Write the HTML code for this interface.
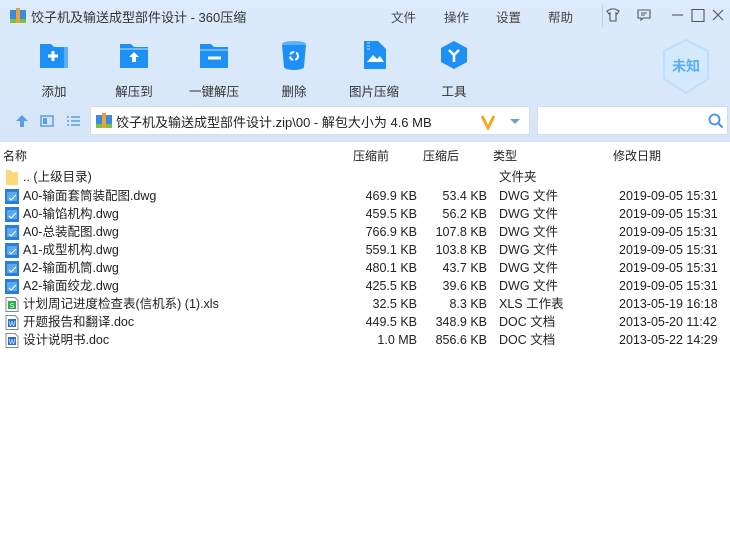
<!DOCTYPE html>
<html><head><meta charset="utf-8"><style>
*{margin:0;padding:0;box-sizing:border-box}
body{width:730px;height:540px;overflow:hidden;background:#fff;font-family:"Liberation Sans","Noto Sans CJK SC",sans-serif;font-size:12px;color:#222;position:relative}
.top{position:absolute;left:0;top:0;width:730px;height:142px;background:linear-gradient(#dcebfb,#d6e6f8)}
.abs{position:absolute}
.menu{top:7px;font-size:12.5px;color:#444}
.tb{position:absolute;top:40px;width:60px;text-align:center;font-size:12.5px;color:#333}
.tb .ic{margin:0 auto 8px;width:32px;height:30px}
.tb span{display:block}
.addr{position:absolute;left:90px;top:106px;width:440px;height:29px;background:#fff;border:1px solid #cfdff0}
.search{position:absolute;left:537px;top:106px;width:191px;height:29px;background:#fff;border:1px solid #cfdff0}
.hdr{position:absolute;top:147px;font-size:12px;color:#222}
.row{position:absolute;left:0;width:730px;height:18px;font-size:12.5px;line-height:18px}
.row div{position:absolute;top:0;white-space:nowrap;line-height:18px}
.fi{position:absolute;left:5px;top:2px;width:14px;height:15px}
</style></head><body>
<div class="top"></div>
<svg class="abs" style="left:10px;top:8px" width="16" height="16"><rect x="0" y="2" width="16" height="13" fill="#3a8be0"/><rect x="0" y="11" width="16" height="4" fill="#7ac142"/><rect x="6" y="0" width="4" height="15" fill="#e9a23b"/></svg>
<div class="abs" style="left:31px;top:7px;font-size:13px;color:#333">饺子机及输送成型部件设计 - 360压缩</div>
<div class="abs menu" style="left:391px">文件</div>
<div class="abs menu" style="left:444px">操作</div>
<div class="abs menu" style="left:496px">设置</div>
<div class="abs menu" style="left:548px">帮助</div>
<div class="abs" style="left:602px;top:5px;width:1px;height:22px;background:#b9cde3"></div>
<svg class="abs" style="left:605px;top:8px" width="120" height="14" fill="none" stroke="#555" stroke-width="1.1"><path d="M2 3l4-2h4l4 2-2 3-1-1v8H5V5L4 6z"/><path d="M33 2h12v8h-7l-2 2v-2h-3z M36 5h6 M36 7h4"/><path d="M67 7h11"/><path d="M87 1.5h12v12H87z"/><path d="M108 2l10 10M118 2l-10 10"/></svg>

<div class="tb" style="left:24px"><svg class="ic" viewBox="0 0 32 30"><path d="M2 4h11l3 3h14v21H2z" fill="#1e8ff5"/><path d="M26 7h4v21h-4z" fill="#5cb0fb"/><path d="M15 11v10M10 16h10" stroke="#fff" stroke-width="3"/></svg><span>添加</span></div>
<div class="tb" style="left:104px"><svg class="ic" viewBox="0 0 32 30"><path d="M2 4h11l3 3h14v21H2z" fill="#1e8ff5"/><path d="M2 9h28" stroke="#8cc6fb" stroke-width="1.5"/><path d="M16 12l-5 5h3v5h4v-5h3z" fill="#fff"/></svg><span>解压到</span></div>
<div class="tb" style="left:184px"><svg class="ic" viewBox="0 0 32 30"><path d="M2 4h11l3 3h14v21H2z" fill="#1e8ff5"/><path d="M2 10h28" stroke="#8cc6fb" stroke-width="1.5"/><path d="M10 18h13" stroke="#fff" stroke-width="3"/></svg><span>一键解压</span></div>
<div class="tb" style="left:264px"><svg class="ic" viewBox="0 0 32 30"><ellipse cx="16" cy="4" rx="12" ry="3" fill="#5cb0fb"/><path d="M4 5h24l-2 22a10 3 0 0 1-20 0z" fill="#1e8ff5"/><circle cx="16" cy="16" r="4" stroke="#fff" stroke-width="2" fill="none" stroke-dasharray="5 2"/></svg><span>删除</span></div>
<div class="tb" style="left:344px"><svg class="ic" viewBox="0 0 32 30"><path d="M6 1h14l8 8v20H6z" fill="#1e8ff5"/><path d="M9 22l6-7 4 4 3-3 4 6z" fill="#fff"/><path d="M9 3h3M9 6h3M9 9h3" stroke="#8cc6fb" stroke-width="1.5"/></svg><span>图片压缩</span></div>
<div class="tb" style="left:424px"><svg class="ic" viewBox="0 0 32 30"><path d="M16 1l13 7v14l-13 7-13-7V8z" fill="#1e8ff5"/><path d="M11 10l5 5 5-5M16 15v7" stroke="#fff" stroke-width="2.5" fill="none"/></svg><span>工具</span></div>
<svg class="abs" style="left:660px;top:38px" width="52" height="58"><path d="M26 2l22 11v28L26 55 4 41V13z" fill="#d3e9fc" stroke="#bfdef9" stroke-width="2"/><text x="26" y="33" text-anchor="middle" font-size="14" font-weight="bold" fill="#5aaef2" font-family="Noto Sans CJK SC,sans-serif">未知</text></svg>

<svg class="abs" style="left:14px;top:113px" width="70" height="16"><path d="M8 2l-6 6h4v6h4V8h4z" fill="#5a9de6"/><rect x="27" y="3" width="12" height="10" fill="none" stroke="#5a9de6" stroke-width="1.5"/><rect x="29" y="5" width="4" height="6" fill="#5a9de6"/><path d="M53 4h2M53 8h2M53 12h2M57 4h9M57 8h9M57 12h9" stroke="#5a9de6" stroke-width="1.5"/></svg>
<div class="addr"><svg class="abs" style="left:5px;top:6px" width="16" height="16"><rect x="0" y="2" width="16" height="13" fill="#3a8be0"/><rect x="0" y="11" width="16" height="4" fill="#7ac142"/><rect x="6" y="0" width="4" height="15" fill="#e9a23b"/></svg><div class="abs" style="left:25px;top:5px;font-size:13px;color:#222">饺子机及输送成型部件设计.zip\00 - 解包大小为 4.6 MB</div>
<svg class="abs" style="left:390px;top:7px" width="45" height="16"><path d="M1 2l6 12 6-12" stroke="#f5a623" stroke-width="3" fill="none"/><path d="M29 5h10l-5 5z" fill="#6d9fd8"/></svg></div>
<div class="search"><svg class="abs" style="left:170px;top:6px" width="16" height="16"><circle cx="6.5" cy="6.5" r="5" stroke="#4a90e2" stroke-width="1.8" fill="none"/><path d="M10 10l4.5 4.5" stroke="#4a90e2" stroke-width="2"/></svg></div>

<div class="hdr" style="left:3px">名称</div>
<div class="hdr" style="left:353px">压缩前</div>
<div class="hdr" style="left:423px">压缩后</div>
<div class="hdr" style="left:493px">类型</div>
<div class="hdr" style="left:613px">修改日期</div>

<div class="row" style="top:168px"><svg class="fi" viewBox="0 0 14 15"><path d="M1 0h5l1 2h6v13H1z" fill="#fbd97a"/></svg><div style="left:23px">.. (上级目录)</div><div style="left:499px">文件夹</div></div>

<div id="rows"></div>
<script>
var d=[["A0-输面套筒装配图.dwg","469.9 KB","53.4 KB","DWG 文件","2019-09-05 15:31","d"],
["A0-输馅机构.dwg","459.5 KB","56.2 KB","DWG 文件","2019-09-05 15:31","d"],
["A0-总装配图.dwg","766.9 KB","107.8 KB","DWG 文件","2019-09-05 15:31","d"],
["A1-成型机构.dwg","559.1 KB","103.8 KB","DWG 文件","2019-09-05 15:31","d"],
["A2-输面机筒.dwg","480.1 KB","43.7 KB","DWG 文件","2019-09-05 15:31","d"],
["A2-输面绞龙.dwg","425.5 KB","39.6 KB","DWG 文件","2019-09-05 15:31","d"],
["计划周记进度检查表(信机系) (1).xls","32.5 KB","8.3 KB","XLS 工作表","2013-05-19 16:18","x"],
["开题报告和翻译.doc","449.5 KB","348.9 KB","DOC 文档","2013-05-20 11:42","w"],
["设计说明书.doc","1.0 MB","856.6 KB","DOC 文档","2013-05-22 14:29","w"]];
var h="";
d.forEach(function(r,i){var t=187+i*18;var ic;
if(r[5]=="d")ic='<svg class="fi" viewBox="0 0 14 15"><rect width="14" height="15" fill="#2a7fd4"/><rect x="2" y="3" width="10" height="9" fill="#5aa8ef"/><path d="M4 9l2 2 5-5" stroke="#fff" fill="none"/></svg>';
else if(r[5]=="x")ic='<svg class="fi" viewBox="0 0 14 15"><path d="M1 .5h9l3 3v11H1z" fill="#fff" stroke="#888"/><rect x="3" y="4" width="8" height="8" fill="#2fa84f"/><text x="7" y="11" font-size="7" fill="#fff" text-anchor="middle" font-family="Liberation Sans">S</text></svg>';
else ic='<svg class="fi" viewBox="0 0 14 15"><path d="M1 .5h9l3 3v11H1z" fill="#fff" stroke="#888"/><rect x="3" y="4" width="8" height="8" fill="#2a6fd4"/><text x="7" y="11" font-size="7" fill="#fff" text-anchor="middle" font-family="Liberation Sans">W</text></svg>';
h+='<div class="row" style="top:'+t+'px">'+ic+'<div style="left:23px">'+r[0]+'</div><div style="right:313px">'+r[1]+'</div><div style="right:243px">'+r[2]+'</div><div style="left:499px">'+r[3]+'</div><div style="left:619px">'+r[4]+'</div></div>';});
document.getElementById("rows").innerHTML=h;
</script>
</body></html>
